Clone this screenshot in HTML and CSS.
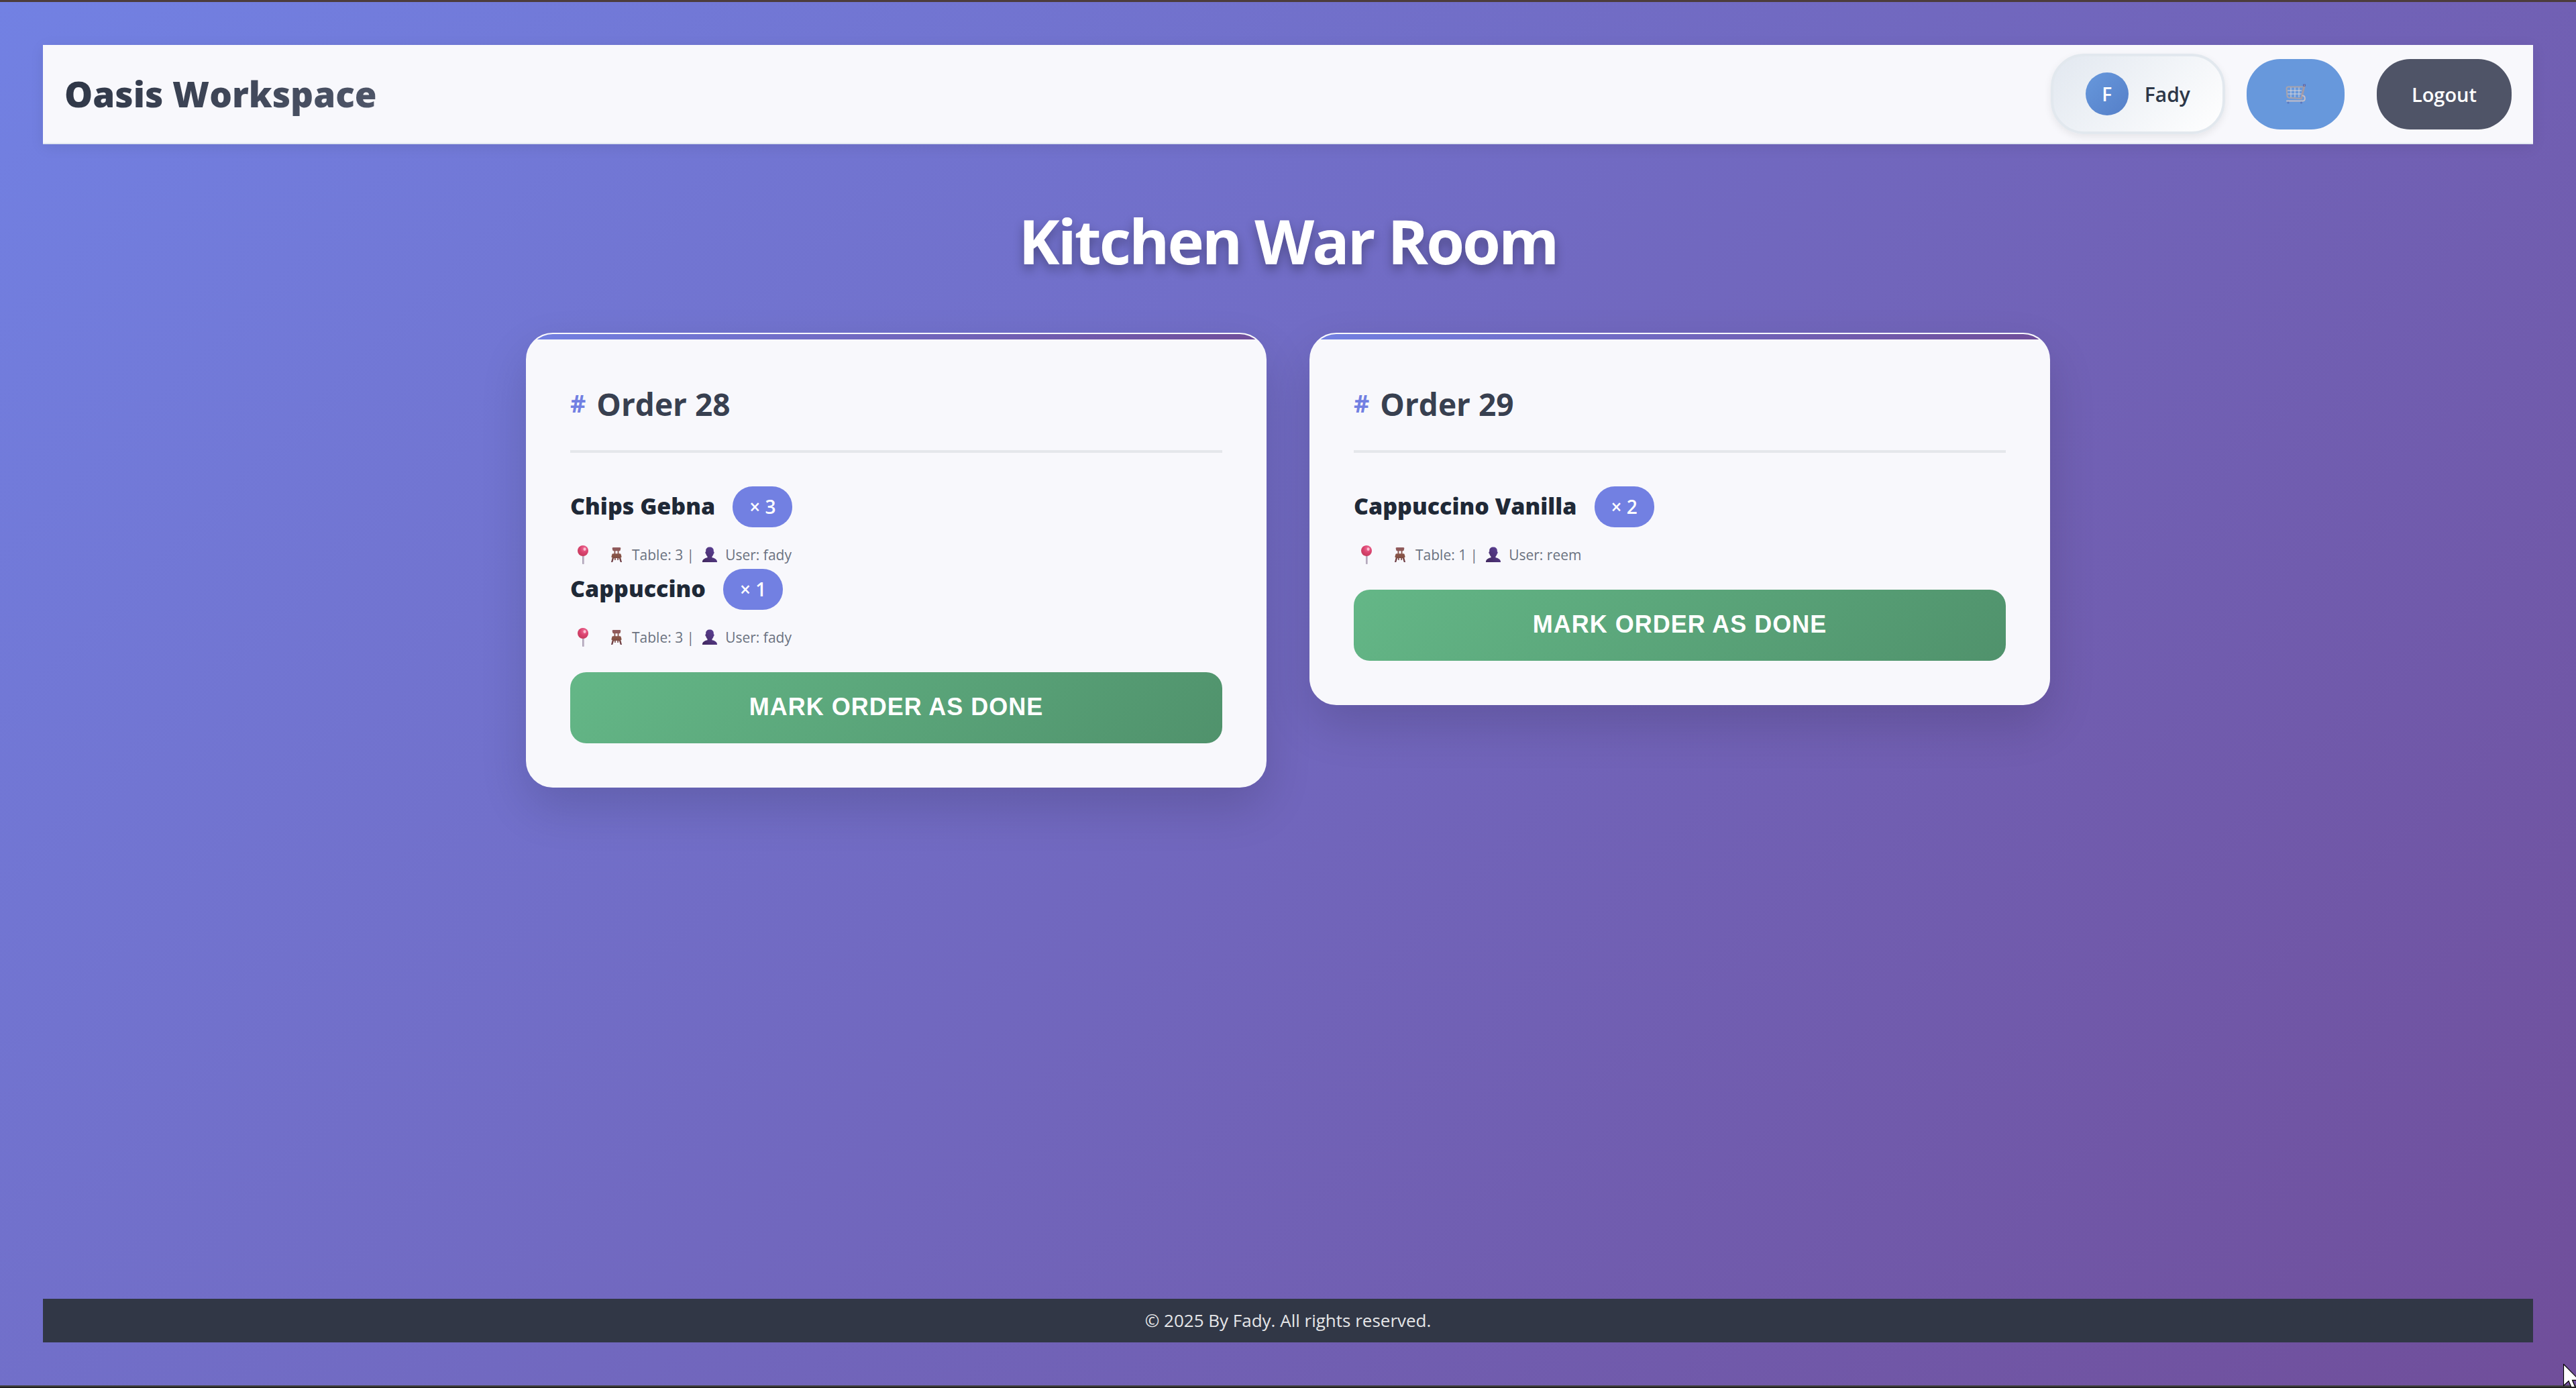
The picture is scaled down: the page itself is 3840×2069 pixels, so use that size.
FILE: index.html
```html
<!DOCTYPE html>
<html lang="en">
<head>
<meta charset="utf-8">
<meta name="viewport" content="width=device-width, initial-scale=1">
<title>Kitchen War Room</title>
<link rel="stylesheet" href="styles.css">
</head>
<body>
<svg class="sprite" aria-hidden="true">
  <defs>
    <linearGradient id="pin-shaft" x1="0" x2="1" y1="0" y2="0"><stop offset="0" stop-color="#a79bb0"/><stop offset="1" stop-color="#cfc6d6"/></linearGradient>
    <radialGradient id="pin-head" cx=".62" cy=".3" r=".75"><stop offset="0" stop-color="#f0709a"/><stop offset=".5" stop-color="#db4470"/><stop offset="1" stop-color="#c43a5c"/></radialGradient>
    <linearGradient id="person-fill" x1="0" x2="1" y1="1" y2="0"><stop offset="0" stop-color="#41285e"/><stop offset="1" stop-color="#5e429a"/></linearGradient>
    <linearGradient id="chair-fill" x1="0" x2="0" y1="0" y2="1"><stop offset="0" stop-color="#925c60"/><stop offset=".6" stop-color="#865344"/><stop offset="1" stop-color="#6b3c48"/></linearGradient>
  </defs>
  <symbol id="icon-pin" viewBox="0 0 38 32">
    <rect x="18" y="17" width="3" height="13" rx="1" fill="url(#pin-shaft)"/>
    <circle cx="19" cy="10" r="8" fill="url(#pin-head)"/>
    <ellipse cx="21.600" cy="7.600" rx="2" ry="2.400" fill="#fbc0d2"/>
  </symbol>
  <symbol id="icon-chair" viewBox="0 0 30 24">
    <path d="M10 1h10c1 0 1.500 .800 1.300 1.700l-.600 2.600c-.200.700-.700 1-1.400 1h-.800v4h1.700c.800 0 1.300.400 1.500 1.100l.800 3c.200.900-.300 1.600-1.200 1.600l1.700 7h-2.200l-2-6h-.600l-.500 3h-1.400v-3h-2.600v3h-1.400l-.500-3h-.600l-2 6H7l1.700-7c-.900 0-1.400-.700-1.200-1.600l.800-3c.200-.700.700-1.100 1.500-1.100h1.700v-4h-.800c-.700 0-1.200-.300-1.400-1l-.600-2.600C8.500 1.800 9 1 10 1zm3.400 5.300v4h3.200v-4z" fill="url(#chair-fill)"/>
  </symbol>
  <symbol id="icon-person" viewBox="0 0 30 24">
    <path d="M15 .500c3.600 0 5.800 2 5.800 5.200v1.500c1.200.300 1.200 2.800-.100 3.200-.400 1.800-1.200 3.100-2.200 4v1.800c4.500.700 7.500 3 7.500 6.300v.500H4v-.500c0-3.300 3-5.600 7.500-6.300v-1.800c-1-.900-1.800-2.200-2.200-4-1.300-.400-1.300-2.900-.100-3.200V5.700c0-3.200 2.200-5.200 5.800-5.200z" fill="url(#person-fill)"/>
  </symbol>
  <symbol id="icon-cart" viewBox="0 0 30 30">
    <g fill="none" stroke="#d9d6da" stroke-width="1">
      <path d="M8 5v15M14 5v15M20 5v15M3 10h21M3 15h21"/>
    </g>
    <g fill="none" stroke-linecap="round" stroke-linejoin="round">
      <path d="M25 4.500H4.200C2.400 4.500 1.400 5.500 1.500 7l1 11c.200 1.800 1.200 2.500 3 2.700l18 1.300" stroke="#a9a3ab" stroke-width="2"/>
      <path d="M28 3l-4.500 19" stroke="#a39aa6" stroke-width="3"/>
      <path d="M25.500 17.500c4.500.500 4.500 8 0 8H2" stroke="#c4bec8" stroke-width="2"/>
    </g>
    <rect x="26.500" y="1" width="3" height="2.200" fill="none" stroke="#5b63a8" stroke-width="1"/>
    <g fill="#5c76bd"><circle cx="4" cy="28" r="1.600"/><circle cx="23.500" cy="28" r="1.600"/></g>
  </symbol>
</svg>

<header class="topbar">
  <div class="brand">Oasis Workspace</div>
  <nav class="actions" aria-label="Account">
    <div class="profile">
      <span class="avatar">F</span>
      <span class="profile-name">Fady</span>
    </div>
    <button class="pill cart" type="button" aria-label="Cart"><svg class="cart-icon" aria-hidden="true"><use href="#icon-cart"/></svg></button>
    <button class="pill logout" type="button">Logout</button>
  </nav>
</header>

<main class="board">
  <h1 class="title">Kitchen War Room</h1>
  <div class="orders">
    <article class="order">
      <h2 class="order-title"><span class="hash">#</span>Order 28</h2>
      <div class="item">
        <div class="item-head"><span class="item-name">Chips Gebna</span><span class="qty">× 3</span></div>
        <div class="meta">
          <svg class="pin" aria-hidden="true"><use href="#icon-pin"/></svg>
          <svg class="glyph" aria-hidden="true"><use href="#icon-chair"/></svg><span>Table: 3 |</span>
          <svg class="glyph" aria-hidden="true"><use href="#icon-person"/></svg><span>User: fady</span>
        </div>
      </div>
      <div class="item">
        <div class="item-head"><span class="item-name">Cappuccino</span><span class="qty">× 1</span></div>
        <div class="meta">
          <svg class="pin" aria-hidden="true"><use href="#icon-pin"/></svg>
          <svg class="glyph" aria-hidden="true"><use href="#icon-chair"/></svg><span>Table: 3 |</span>
          <svg class="glyph" aria-hidden="true"><use href="#icon-person"/></svg><span>User: fady</span>
        </div>
      </div>
      <button class="done" type="button">Mark order as done</button>
    </article>
    <article class="order">
      <h2 class="order-title"><span class="hash">#</span>Order 29</h2>
      <div class="item">
        <div class="item-head"><span class="item-name">Cappuccino Vanilla</span><span class="qty">× 2</span></div>
        <div class="meta">
          <svg class="pin" aria-hidden="true"><use href="#icon-pin"/></svg>
          <svg class="glyph" aria-hidden="true"><use href="#icon-chair"/></svg><span>Table: 1 |</span>
          <svg class="glyph" aria-hidden="true"><use href="#icon-person"/></svg><span>User: reem</span>
        </div>
      </div>
      <button class="done" type="button">Mark order as done</button>
    </article>
  </div>
</main>

<footer class="footer">© 2025 By Fady. All rights reserved.</footer>

<svg class="cursor" viewBox="0 0 24 36" aria-hidden="true">
  <path d="M.500 .500v32l7.500-7 5.500 13 5-2.200-5-12H24z" fill="#fff" stroke="#000" stroke-width="1.200"/>
</svg>
</body>
</html>
```

FILE: styles.css
```css
* {
  box-sizing: border-box;
}

body {
  position: relative;
  display: flex;
  flex-direction: column;
  min-height: 100vh;
  margin: 0;
  padding: 64px 64px 66px;
  overflow-x: hidden;
  border-top: 3px solid #4c3c3c;
  border-bottom: 2px solid #222;
  background: linear-gradient(135deg, #7281e3 0%, #704e9a 100%) padding-box;
  box-shadow: inset 0 -2px #444;
  color: #1f2937;
  font-family: "Open Sans", "Noto Sans", sans-serif;
  font-size: 26px;
}

.sprite {
  position: absolute;
  width: 0;
  height: 0;
}

/* Top bar */
.topbar {
  display: flex;
  align-items: center;
  justify-content: space-between;
  padding: 13px 32px;
  border-bottom: 2px solid #e2e8f0;
  background: #f8f8fc;
  box-shadow: 0 4px 20px rgba(0, 0, 0, 0.08);
}

.brand {
  background: linear-gradient(135deg, #2d3545, #50576a);
  background-clip: text;
  -webkit-background-clip: text;
  color: transparent;
  font-size: 53px;
  font-weight: 800;
  line-height: 72px;
}

.actions {
  display: flex;
  align-items: center;
  gap: 32px;
}

.profile {
  display: flex;
  align-items: center;
  gap: 24px;
  height: 120px;
  padding: 0 48px;
  border: 4px solid #e2e8ee;
  border-radius: 50px;
  background: linear-gradient(135deg, #e2e8f0, #fff);
  box-shadow: 0 4px 12px rgba(0, 0, 0, 0.08);
  color: #2d3748;
  font-size: 30px;
  font-weight: 600;
}

.avatar {
  display: grid;
  place-items: center;
  width: 64px;
  height: 64px;
  border-radius: 50%;
  background: linear-gradient(135deg, #6798dc, #557fc8);
  color: #fff;
  font-size: 28px;
}

.pill {
  height: 105px;
  border: 0;
  border-radius: 50px;
  color: #fff;
  font: 600 29px "Open Sans", "Noto Sans", sans-serif;
  cursor: pointer;
}

.cart {
  display: grid;
  place-items: center;
  width: 146px;
  padding: 0;
  background: #6798dc;
}

.cart-icon {
  width: 30px;
  height: 30px;
}

.logout {
  margin-left: 16px;
  padding: 0 52px;
  background: #4f5467;
}

/* Orders */
.board {
  flex: 1;
}

.title {
  margin: 80px 0 73px;
  color: #fff;
  font-size: 92px;
  font-weight: 700;
  line-height: 128px;
  letter-spacing: -3px;
  text-align: center;
  text-shadow: 0 8px 16px rgba(0, 0, 0, 0.3);
}

.orders {
  display: grid;
  grid-template-columns: repeat(2, minmax(0, 1fr));
  align-items: start;
  gap: 64px;
  max-width: 2272px;
  margin: 0 auto;
}

.order {
  position: relative;
  padding: 64px;
  overflow: hidden;
  border: 2px solid #f8f8fc;
  border-radius: 40px;
  background: #f8f8fc;
  box-shadow: 0 30px 70px rgba(0, 0, 0, 0.14);
}

.order::before {
  content: "";
  position: absolute;
  inset: 0 0 auto;
  height: 8px;
  background: linear-gradient(90deg, #7280e2, #704e9a);
}

.order-title {
  display: flex;
  align-items: center;
  gap: 16px;
  margin: 0 0 50px;
  padding-bottom: 29px;
  border-bottom: 4px solid #e5e7eb;
  color: #384050;
  font-size: 46px;
  font-weight: 700;
  line-height: 80px;
}

.hash {
  color: #7280e2;
  font-size: 36px;
}

.item-head {
  display: flex;
  align-items: center;
  gap: 26px;
}

.item-name {
  padding-bottom: 4px;
  font-size: 34px;
  font-weight: 800;
}

.qty {
  padding: 0 25px;
  border-radius: 30px;
  background: #7280e2;
  color: #fff;
  font-size: 28px;
  font-weight: 600;
  line-height: 61px;
}

.meta {
  display: flex;
  align-items: center;
  gap: 8px;
  margin-top: 20px;
  color: #6b7280;
  font-size: 21px;
  line-height: 42px;
}

.pin {
  width: 38px;
  height: 32px;
  margin-right: 8px;
}

.glyph {
  width: 30px;
  height: 24px;
}

.done {
  width: 100%;
  height: 106px;
  margin-top: 31px;
  padding: 0 0 2px;
  border: 0;
  border-radius: 24px;
  background: linear-gradient(135deg, #64b787, #50926c);
  color: #fff;
  font: 700 36px "Liberation Sans", Arial, sans-serif;
  letter-spacing: 1px;
  text-transform: uppercase;
  cursor: pointer;
}

.footer {
  background: #313746;
  color: #e5e6e8;
  font-size: 26px;
  line-height: 65px;
  text-align: center;
}

/* Pointer resting in the corner of the window */
.cursor {
  position: absolute;
  right: -5px;
  bottom: -2px;
  width: 24px;
  height: 36px;
}
```
